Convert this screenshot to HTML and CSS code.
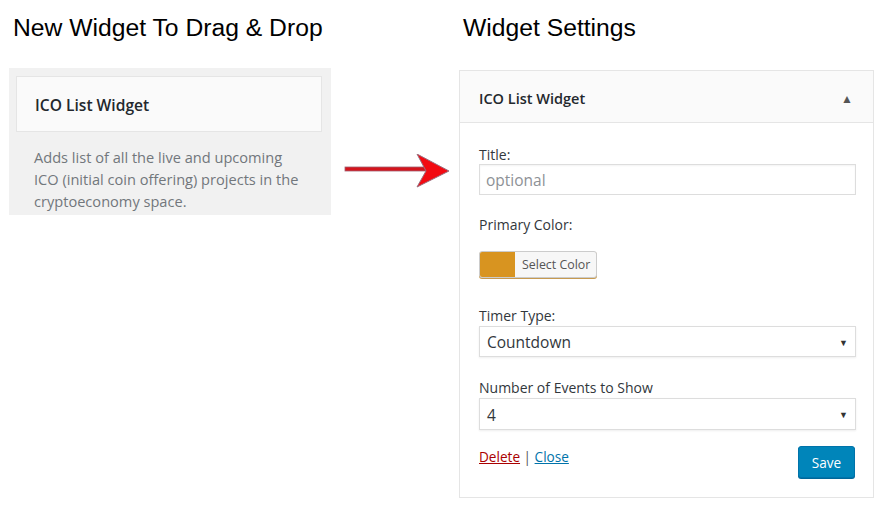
FILE: index.html
```html
<!DOCTYPE html>
<html>
<head>
<meta charset="utf-8">
<link rel="stylesheet" href="styles.css">
</head>
<body>
<div class="page">
  <section class="col-left">
    <h1 class="heading">New Widget To Drag &amp; Drop</h1>
    <div class="available">
      <div class="card"><span class="card-title">ICO List Widget</span></div>
      <p class="desc">Adds list of all the live and upcoming ICO (initial coin offering) projects in the cryptoeconomy space.</p>
    </div>
  </section>
  <div class="col-mid">
    <svg class="arrow" width="110" height="40" viewBox="0 0 110 40">
      <rect x="2" y="13" width="84" height="4" fill="#d4141c" stroke="#a06070" stroke-width="0.8"/>
      <polygon points="74,0 106,17 74,33 83,17" fill="#f20a12" stroke="#9a7080" stroke-width="1"/>
    </svg>
  </div>
  <section class="col-right">
    <h1 class="heading heading-right">Widget Settings</h1>
    <div class="widget">
      <div class="widget-top">
        <span class="widget-title">ICO List Widget</span>
        <span class="toggle">&#9650;</span>
      </div>
      <div class="widget-body">
        <label class="lbl lbl-title">Title:</label>
        <div class="input"><span class="placeholder">optional</span></div>
        <label class="lbl lbl-color">Primary Color:</label>
        <div class="color-btn"><span class="swatch"></span><span class="color-text">Select Color</span></div>
        <label class="lbl lbl-timer">Timer Type:</label>
        <div class="select"><span>Countdown</span><span class="caret">&#9660;</span></div>
        <label class="lbl lbl-events">Number of Events to Show</label>
        <div class="select select-events"><span>4</span><span class="caret">&#9660;</span></div>
        <div class="actions">
          <div class="links"><a class="delete">Delete</a> <span class="sep">|</span> <a class="close">Close</a></div>
          <button class="save">Save</button>
        </div>
      </div>
    </div>
  </section>
</div>
</body>
</html>
```
FILE: styles.css
```css
* { box-sizing: border-box; }
html, body { margin: 0; padding: 0; background: #fff; }
body { font-family: "Open Sans", "Noto Sans", sans-serif; color: #23282d; }
.page { display: flex; align-items: flex-start; padding-left: 9px; }
.col-left { width: 322px; }
.col-mid { width: 128px; padding-top: 154px; padding-left: 12px; }
.col-right { width: 415px; }
.heading {
  margin: 0; height: 68px; padding: 14px 0 0 4px;
  font: normal 24.7px/28px "Liberation Sans", Arial, sans-serif; color: #000;
}
.heading-right { height: 70px; }
.available { background: #f1f1f1; padding: 8px 9px 12px 7px; height: 147px; }
.card {
  background: #fafafa; border: 1px solid #e5e5e5; height: 56px;
  display: flex; align-items: center; padding: 2px 0 0 18px;
}
.card-title { font-weight: 600; font-size: 15.6px; color: #23282d; }
.desc {
  margin: 14px 0 0 18px; font-size: 14.6px; line-height: 22px; color: #72777c; width: 272px;
}
.arrow { display: block; }
.widget { border: 1px solid #e5e5e5; background: #fff; height: 428px; }
.widget-top {
  height: 52px; background: #fafafa; border-bottom: 1px solid #e5e5e5;
  display: flex; align-items: center; justify-content: space-between; padding: 3px 20px 0 19px;
}
.widget-title { font-weight: 600; font-size: 14.5px; color: #23282d; }
.toggle { font-size: 12px; color: #555; }
.widget-body { padding: 0 17px 0 19px; display: flex; flex-direction: column; }
.lbl { font-size: 14px; line-height: 18px; color: #32373c; display: block; }
.lbl-title { margin-top: 23px; }
.input {
  margin-top: 0; height: 31px; border: 1px solid #ddd; box-shadow: inset 0 1px 2px rgba(0,0,0,0.05);
  display: flex; align-items: center; padding-left: 6px;
}
.placeholder { font-size: 15.5px; color: #8d9196; }
.lbl-color { margin-top: 21px; }
.color-btn {
  margin-top: 17px; width: 118px; height: 27px; display: flex; border: 1px solid #ccc; border-radius: 3px;
  box-shadow: 0 1px 0 #c79a4f; overflow: hidden; background: #f7f7f7;
}
.swatch { width: 35px; background: #d89420; }
.color-text { font-size: 12.4px; color: #555; display: flex; align-items: center; padding-left: 7px; }
.lbl-timer { margin-top: 29px; }
.select {
  margin-top: 1px; height: 31px; border: 1px solid #ddd; box-shadow: 0 1px 2px rgba(0,0,0,0.07);
  display: flex; align-items: center; justify-content: space-between; padding: 1px 7px 0 7px;
  font-size: 15.5px; color: #32373c;
}
.caret { font-size: 9px; color: #333; }
.lbl-events { margin-top: 22px; }
.select-events { height: 32px; }
.actions { display: flex; justify-content: space-between; align-items: flex-start; margin-top: 16px; }
.links { font-size: 13.6px; margin-top: 1px; color: #555; }
.delete { color: #a00; text-decoration: underline; }
.close { color: #0073aa; text-decoration: underline; }
.sep { color: #555; }
.save {
  width: 57px; height: 32px; border: 1px solid #0073aa; border-radius: 3px; background: #0085ba;
  color: #fff; font-family: "Open Sans", sans-serif; font-size: 13.6px; padding: 0;
  box-shadow: 0 1px 0 #006799; margin-right: 1px;
}
```
